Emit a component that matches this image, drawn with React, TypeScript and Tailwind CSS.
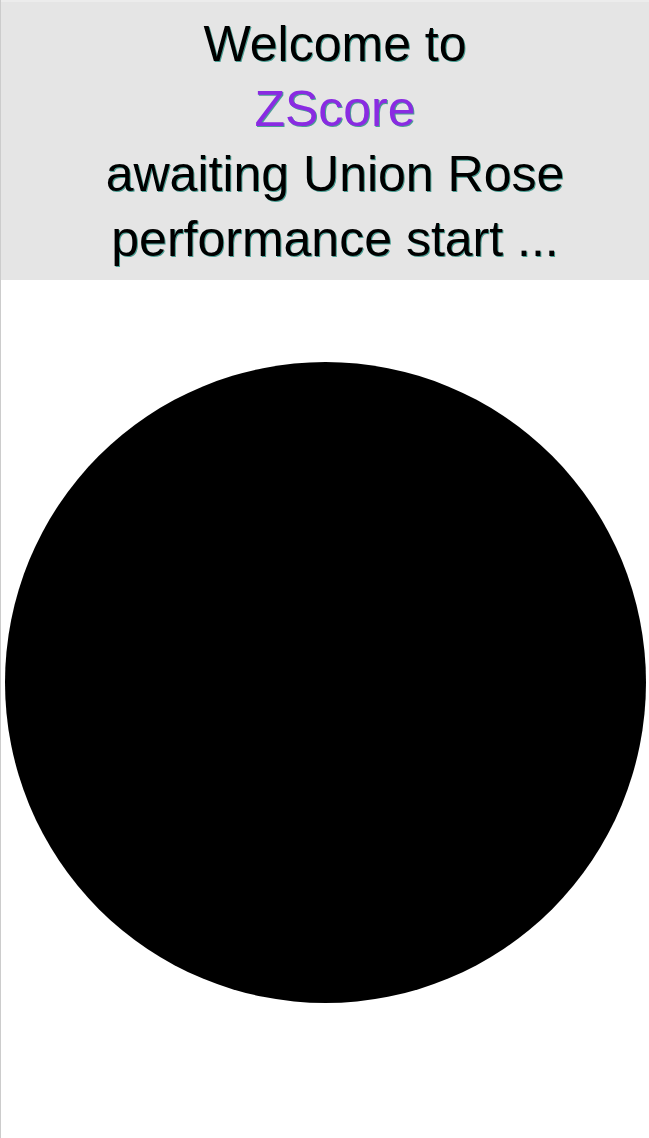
export default function App() {
  return (
    <div className="min-h-screen bg-white border-l border-[#cccccc]" style={{ fontFamily: '"Liberation Sans", Arial, sans-serif' }}>
      {/* Header */}
      <div className="bg-[#e5e5e5] border-t-2 border-[#ececec] pt-[10px] pb-[8px] pl-[20px] text-center text-[50px] leading-[65px] text-black [text-shadow:1px_1px_0_#4a9e94]">
        <div>Welcome to</div>
        <div className="text-[#8a2be2]">ZScore</div>
        <div>awaiting Union Rose</div>
        <div>performance start ...</div>
      </div>

      {/* Waiting indicator */}
      <div className="pt-[82px]">
        <div className="mx-auto w-[641px] h-[641px] rounded-full bg-black" />
      </div>
    </div>
  )
}
